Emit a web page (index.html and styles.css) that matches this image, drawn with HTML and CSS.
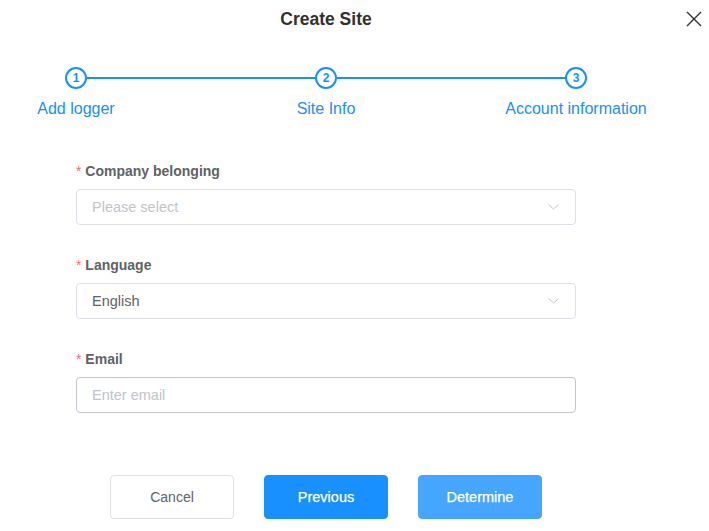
FILE: index.html
```html
<!DOCTYPE html>
<html lang="en">
<head>
<meta charset="utf-8">
<title>Create Site</title>
<link rel="stylesheet" href="styles.css">
</head>
<body>
<div class="dialog">
  <header class="dialog-header">
    <h1 class="dialog-title">Create Site</h1>
    <button class="close-btn" aria-label="Close">
      <svg width="16" height="16" viewBox="0 0 16 16"><path d="M1 1 L15 15 M15 1 L1 15" stroke="#303133" stroke-width="1.4" fill="none"/></svg>
    </button>
  </header>

  <div class="steps">
    <div class="step">
      <div class="step-icon">1</div>
      <div class="step-title">Add logger</div>
    </div>
    <div class="step">
      <div class="step-icon">2</div>
      <div class="step-title">Site Info</div>
    </div>
    <div class="step">
      <div class="step-icon">3</div>
      <div class="step-title">Account information</div>
    </div>
  </div>

  <form class="form">
    <div class="form-item">
      <label class="form-label"><span class="req">*</span> Company belonging</label>
      <div class="select">
        <span class="placeholder">Please select</span>
        <svg class="chevron" width="11" height="6" viewBox="0 0 11 6"><path d="M0.5 0.5 L5.5 5 L10.5 0.5" stroke="#c0c4cc" stroke-width="1" fill="none"/></svg>
      </div>
    </div>
    <div class="form-item">
      <label class="form-label"><span class="req">*</span> Language</label>
      <div class="select">
        <span class="value">English</span>
        <svg class="chevron" width="11" height="6" viewBox="0 0 11 6"><path d="M0.5 0.5 L5.5 5 L10.5 0.5" stroke="#c0c4cc" stroke-width="1" fill="none"/></svg>
      </div>
    </div>
    <div class="form-item">
      <label class="form-label"><span class="req">*</span> Email</label>
      <input class="input" type="text" placeholder="Enter email">
    </div>
  </form>

  <footer class="footer">
    <button class="btn btn-default">Cancel</button>
    <button class="btn btn-primary">Previous</button>
    <button class="btn btn-primary btn-light">Determine</button>
  </footer>
</div>
</body>
</html>
```

FILE: styles.css
```css
* { box-sizing: border-box; }
html, body { margin: 0; padding: 0; background: #fff; }
body { font-family: "Liberation Sans", Arial, sans-serif; }

.dialog {
  position: relative;
  width: 652px;
}

.dialog-header {
  height: 36px;
  display: flex;
  align-items: center;
  justify-content: center;
}
.dialog-title {
  margin: 0;
  font-size: 17.5px;
  font-weight: bold;
  color: #303133;
  line-height: 24px;
  padding-top: 1px;
}
.close-btn {
  position: absolute;
  top: 11px;
  left: 686px;
  width: 16px;
  height: 16px;
  padding: 0;
  border: 0;
  background: none;
  display: flex;
}

/* steps */
.steps {
  position: relative;
  display: flex;
  justify-content: space-between;
  margin-top: 31px;
}
.steps::before {
  content: "";
  position: absolute;
  left: 76px;
  right: 76px;
  top: 10px;
  height: 2px;
  background: #1890ff;
}
.step {
  width: 152px;
  display: flex;
  flex-direction: column;
  align-items: center;
  position: relative;
}
.step-icon {
  width: 22px;
  height: 22px;
  border: 2px solid #1890ff;
  border-radius: 50%;
  background: #fff;
  color: #1890ff;
  font-size: 12px;
  font-weight: bold;
  display: flex;
  align-items: center;
  justify-content: center;
  line-height: 1;
}
.step-title {
  margin-top: 9px;
  font-size: 16px;
  line-height: 22px;
  color: #1890ff;
  white-space: nowrap;
}

/* form */
.form {
  margin: 41px 0 0 76px;
  width: 500px;
}
.form-item { margin-bottom: 30px; }
.form-label {
  display: block;
  font-size: 14px;
  font-weight: bold;
  color: #606266;
  line-height: 20px;
  margin-bottom: 8px;
}
.req { color: #f56c6c; font-weight: normal; }

.select, .input {
  width: 500px;
  height: 36px;
  border: 1px solid #dcdfe6;
  border-radius: 4px;
  font-family: "Liberation Sans", Arial, sans-serif;
  font-size: 14.5px;
  padding: 0 15px;
  background: #fff;
}
.select {
  display: flex;
  align-items: center;
  justify-content: space-between;
}
.placeholder { color: #c0c4cc; }
.value { color: #606266; }
.chevron { margin-right: 1px; }
.input {
  display: block;
  border-color: #c0c4cc;
  color: #606266;
  outline: none;
}
.input::placeholder { color: #c0c4cc; }

/* footer */
.footer {
  display: flex;
  justify-content: center;
  gap: 30px;
  margin-top: 62px;
}
.btn {
  width: 124px;
  height: 44px;
  border-radius: 4px;
  font-family: "Liberation Sans", Arial, sans-serif;
  font-size: 14px;
  cursor: pointer;
}
.btn-default {
  background: #fff;
  border: 1px solid #dcdfe6;
  color: #606266;
}
.btn-primary {
  background: #1890ff;
  border: 1px solid #1890ff;
  color: #fff;
  font-size: 14.5px;
  -webkit-text-stroke: 0.25px #fff;
}
.btn-light {
  background: #46a6ff;
  border-color: #46a6ff;
}
```
